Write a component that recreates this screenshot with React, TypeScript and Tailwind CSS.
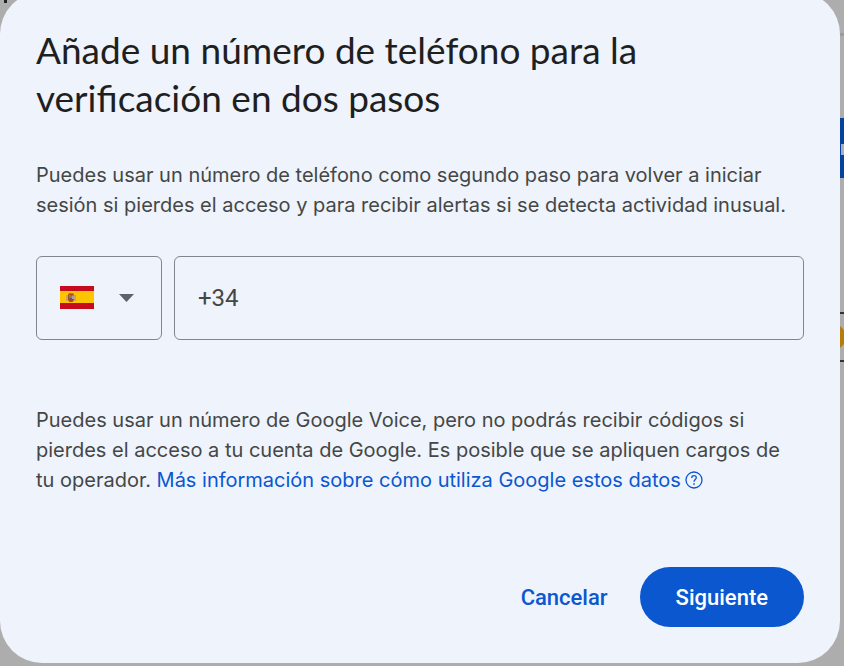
import { useState } from "react";

function SpainFlag() {
  return (
    <svg width="35" height="24" viewBox="0 0 35 24" aria-hidden="true">
      <rect width="35" height="24" fill="#f4f1f1" />
      <rect width="34" height="23" fill="#c60b1e" />
      <rect y="5" width="34" height="12" fill="#ffc400" />
      <rect x="6" y="9" width="2" height="6" fill="#d0a060" />
      <rect x="14" y="9" width="2" height="6" fill="#d0a060" />
      <path d="M8 9l1-2h4l1 2v5l-1.500 2h-3L8 14z" fill="#ad4a19" />
      <path d="M9 9h2v3H9z" fill="#c8642d" />
      <path d="M11.500 9.500H14V13h-2.500z" fill="#a2a0b4" />
      <path d="M10 12h2v2h-2z" fill="#57528a" />
      <path d="M9 7h4v1H9z" fill="#b07922" />
    </svg>
  );
}

function HelpIcon() {
  return (
    <svg
      className="ml-1 inline-block align-[-2px]"
      width="18"
      height="18"
      viewBox="0 0 18 18"
      fill="none"
      stroke="currentColor"
      strokeWidth="1.3"
      aria-hidden="true"
    >
      <circle cx="9" cy="9" r="8" />
      <path d="M6.700 7C6.700 5.600 7.700 4.700 9 4.700s2.300.9 2.300 2.100c0 1.700-2.300 1.900-2.300 4" />
      <path d="M9 12.200v1.500" strokeWidth="1.600" />
    </svg>
  );
}

function PageBehind() {
  return (
    <div aria-hidden="true" className="absolute inset-0 overflow-hidden">
      <div className="absolute top-0 left-1 h-[3px] w-[3px] bg-[#202322]" />
      <div className="absolute top-[33px] right-0 h-[3px] w-5 bg-[#999c9f]" />
      <div className="absolute top-[118px] right-0 h-[60px] w-5 bg-[#0842a0]" />
      <div className="absolute top-[144px] right-0 h-[11px] w-[3px] bg-[#a7adb9]" />
      <div className="absolute top-[312px] right-0 h-[50px] w-5 border-y-2 border-[#303434]" />
      <svg className="absolute top-[326px] right-0" width="4" height="22" viewBox="0 0 4 22">
        <path d="M0 0l4 4v14l-4 4z" fill="#b57c0e" />
      </svg>
    </div>
  );
}

export default function App() {
  const [phone, setPhone] = useState("+34");
  return (
    <div className="relative flow-root min-h-screen bg-[#adadad] font-['Roboto',sans-serif] text-[#444746]">
      <PageBehind />
      <form
        role="dialog"
        aria-labelledby="title"
        onSubmit={(e) => e.preventDefault()}
        className="relative -mt-2 mr-1 rounded-[42px] bg-[#eef3fc] px-9 pt-[34px] pb-9"
      >
        <h1 id="title" className="text-[37px] leading-12 text-[#1f1f1f] font-['Lato',sans-serif]">
          Añade un número de teléfono para la verificación en dos pasos
        </h1>
        <p className="mt-[38px] font-['Inter',sans-serif] text-[20px] leading-[30px]">
          Puedes usar un número de teléfono como segundo paso para volver a iniciar sesión si pierdes
          el acceso y para recibir alertas si se detecta actividad inusual.
        </p>
        <div className="mt-9 flex h-21 gap-3">
          <div className="relative flex w-[126px] items-center rounded-md border border-[#80868b] pl-[23px]">
            <SpainFlag />
            <svg className="ml-6" width="15" height="8" viewBox="0 0 15 8" aria-hidden="true">
              <path d="M0 0h15L7.500 8z" fill="#5f6368" />
            </svg>
            <select aria-label="País" className="absolute inset-0 opacity-0">
              <option>España</option>
            </select>
          </div>
          <input
            type="tel"
            aria-label="Número de teléfono"
            value={phone}
            onChange={(e) => setPhone(e.target.value)}
            className="min-w-0 flex-1 rounded-md border border-[#80868b] bg-transparent px-[23px] text-[24px] outline-none"
          />
        </div>
        <p className="mt-[65px] pr-4 font-['Inter',sans-serif] text-[20px] leading-[30px]">
          Puedes usar un número de Google Voice, pero no podrás recibir códigos si pierdes el acceso a
          tu cuenta de Google. Es posible que se apliquen cargos de tu operador.{" "}
          <a href="#datos" className="text-[#0b57d0]">
            Más información sobre cómo utiliza Google estos datos
            <HelpIcon />
          </a>
        </p>
        <div className="mt-18 flex h-15 justify-end gap-2 text-[22px] font-medium">
          <button type="button" className="px-6 text-[#0b57d0]">
            Cancelar
          </button>
          <button type="submit" className="rounded-full bg-[#0b57d0] px-9 text-white">
            Siguiente
          </button>
        </div>
      </form>
    </div>
  );
}
